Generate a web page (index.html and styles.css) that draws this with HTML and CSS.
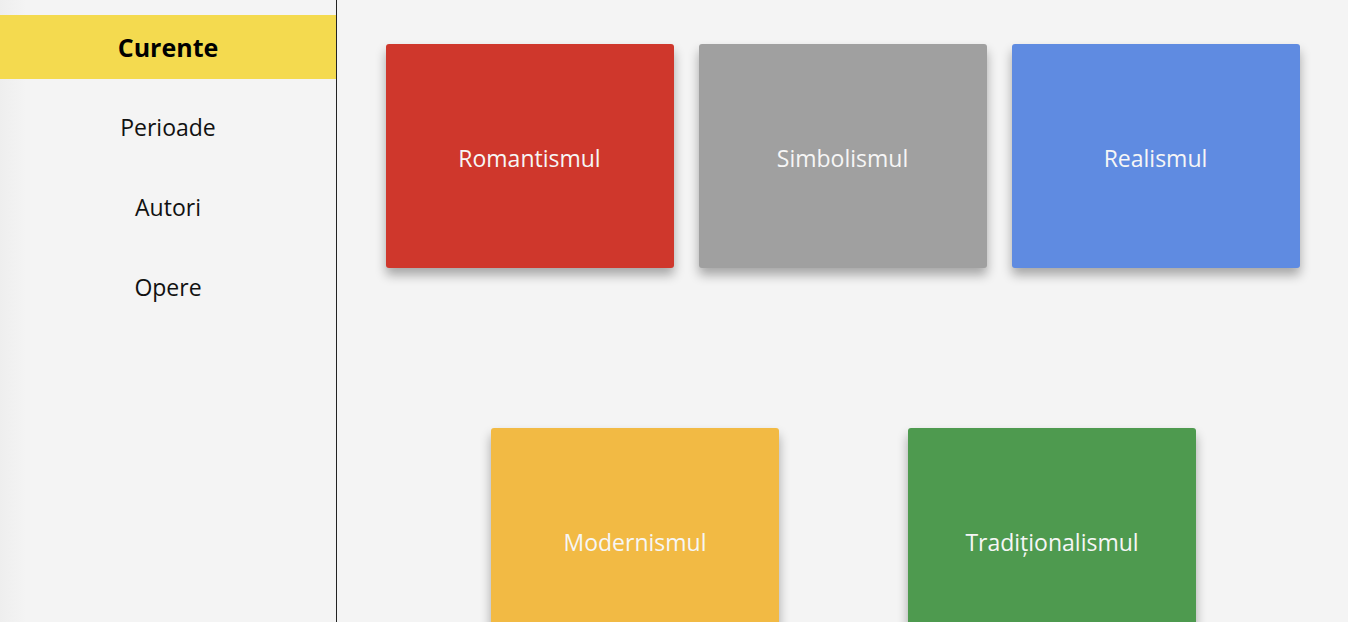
FILE: index.html
```html
<!DOCTYPE html>
<html lang="ro">
<head>
<meta charset="utf-8">
<title>Curente</title>
<link rel="stylesheet" href="styles.css">
</head>
<body>
<div class="layout">
  <nav class="sidebar">
    <a class="nav-item active">Curente</a>
    <a class="nav-item">Perioade</a>
    <a class="nav-item">Autori</a>
    <a class="nav-item">Opere</a>
  </nav>
  <main class="main">
    <div class="row row-top">
      <div class="card red">Romantismul</div>
      <div class="card gray">Simbolismul</div>
      <div class="card blue">Realismul</div>
    </div>
    <div class="row row-bottom">
      <div class="card yellow">Modernismul</div>
      <div class="card green">Tradiționalismul</div>
    </div>
  </main>
</div>
</body>
</html>
```

FILE: styles.css
```css
html, body {
  margin: 0;
  padding: 0;
  height: 100%;
  overflow: hidden;
}
body {
  background: #f4f4f4;
  font-family: "Open Sans", "Noto Sans", sans-serif;
}
.layout {
  display: flex;
  height: 622px;
}
.sidebar {
  width: 336px;
  flex: 0 0 336px;
  border-right: 1px solid #222;
  background: linear-gradient(to right, #eeeeee 0px, #f4f4f4 26px);
  padding-top: 15px;
  display: flex;
  flex-direction: column;
  gap: 16px;
}
.nav-item {
  display: flex;
  align-items: center;
  justify-content: center;
  height: 64px;
  font-size: 23px;
  color: #111;
}
.nav-item.active {
  background: #f4da4f;
  font-weight: 700;
  font-size: 25px;
  color: #000;
}
.main {
  flex: 1;
  display: flex;
  flex-direction: column;
  padding-top: 44px;
}
.row {
  display: flex;
  justify-content: center;
}
.row-top {
  gap: 25px;
}
.row-bottom {
  gap: 129px;
  margin-top: 160px;
  padding-left: 2px;
}
.card {
  width: 288px;
  height: 224px;
  flex: 0 0 288px;
  border-radius: 3px;
  display: flex;
  align-items: center;
  justify-content: center;
  padding-top: 3px;
  box-sizing: border-box;
  color: #f6f6f6;
  font-size: 23px;
  font-weight: 500;
  box-shadow: 0 7px 11px rgba(0,0,0,0.32);
}
.red { background: #cf372c; }
.gray { background: #a0a0a0; }
.blue { background: #5f8be1; }
.yellow { background: #f2ba44; }
.green { background: #4e9a4f; }
```
